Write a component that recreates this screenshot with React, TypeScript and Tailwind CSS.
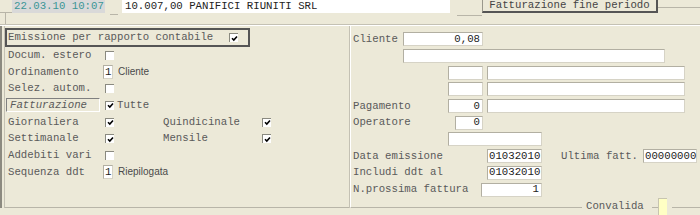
import React from "react";

const Check = ({ on }: { on?: boolean }) => (
  <span className="inline-flex w-[9px] h-[9px] bg-white border-t border-l border-[#8a8a80] items-center justify-center shrink-0">
    {on ? (
      <svg width="7" height="7" viewBox="0 0 7 7">
        <path d="M1 3.2 L2.8 5 L6 1.5" stroke="#000" strokeWidth="1.6" fill="none" />
      </svg>
    ) : null}
  </span>
);

const Field = ({ w, children, right, ml }: { w: string; children?: React.ReactNode; right?: boolean; ml?: string }) => (
  <span
    className={`flex h-[14px] ${w} ${ml ?? ""} bg-white border border-[#d6d3c6] border-t-[#b2afa2] border-l-[#b2afa2] items-center ${right ? "justify-end pr-[2px]" : "pl-[1px]"} text-[#222] shrink-0 leading-none`}
  >
    {children}
  </span>
);

const Row = ({ children, cls }: { children: React.ReactNode; cls?: string }) => (
  <div className={`flex items-center h-[16.7px] shrink-0 ${cls ?? ""}`}>{children}</div>
);

export default function App() {
  return (
    <div className="w-[700px] h-[215px] bg-[#ece9d8] overflow-hidden flex flex-col font-['Liberation_Mono',monospace] text-[10.7px] text-[#5a5a5a] leading-none">
      {/* top strip */}
      <div className="flex items-start h-[24px] shrink-0">
        <div className="w-[12px] h-[24px] flex flex-col shrink-0">
          <div className="h-[13px] border-b border-[#b8b5a8]" />
          <div className="flex-1 ml-[5px] border-l border-[#b8b5a8]" />
        </div>
        <div className="w-[93px] h-[13px] bg-[#d9d9d9] flex items-center pl-[2px] text-[#3a9696]">22.03.10 10:07</div>
        <div className="ml-[5px] w-[8px] h-[15px] border-b border-[#b8b5a8]" />
        <div className="ml-[4px] w-[328px] h-[13px] bg-white flex items-center pl-[3px] text-[#222]">10.007,00 PANIFICI RIUNITI SRL</div>
        <div className="ml-[7px] w-[25px] h-[16px] border-b border-[#b8b5a8]" />
        <div className="w-[176px] h-[13px] border-l border-[#9a988c] border-r-2 border-b-2 border-r-[#555] border-b-[#555] flex items-center justify-center text-[#444]">
          Fatturazione fine periodo
        </div>
        <div className="flex-1 h-[8px] border-b border-[#b8b5a8]" />
      </div>

      {/* main */}
      <div className="relative flex h-[191px] shrink-0 border-t border-[#c4c1b4] items-start">
        <div className="absolute left-0 right-0 top-0 h-px bg-white" />
        {/* left panel */}
        <div className="w-[349px] h-[183px] shrink-0 border-l-2 border-[#8c8a80] flex">
          <div className="ml-[2px] w-[347px] border-l border-[#c4c1b4] flex flex-col border-b border-b-[#b8b5a8] h-[183px]">
            <div className="mt-[3px] w-[245px] h-[19px] border-2 border-[#555] flex items-center pl-[1px] shrink-0">
              <span className="w-[221px]">Emissione per rapporto contabile</span>
              <Check on />
            </div>
            <Row cls="pl-[3px]">
              <span className="w-[97px]">Docum. estero</span>
              <Check />
            </Row>
            <Row cls="pl-[3px]">
              <span className="w-[95px]">Ordinamento</span>
              <Field w="w-[10px]">1</Field>
              <span className="ml-[5px] font-['Liberation_Sans',sans-serif] text-[10px] text-[#4a4a4a]">Cliente</span>
            </Row>
            <Row cls="pl-[3px]">
              <span className="w-[97px]">Selez. autom.</span>
              <Check />
            </Row>
            <Row cls="pl-[1px]">
              <span className="w-[94px] h-[14px] border border-[#808080] border-r-white border-b-white flex items-center pl-[3px] italic">
                Fatturazione
              </span>
              <span className="ml-[5px] flex"><Check on /></span>
              <span className="ml-[3px]">Tutte</span>
            </Row>
            <Row cls="pl-[3px]">
              <span className="w-[97px]">Giornaliera</span>
              <Check on />
              <span className="ml-[49px] w-[99px]">Quindicinale</span>
              <Check on />
            </Row>
            <Row cls="pl-[3px]">
              <span className="w-[97px]">Settimanale</span>
              <Check on />
              <span className="ml-[49px] w-[99px]">Mensile</span>
              <Check on />
            </Row>
            <Row cls="pl-[3px]">
              <span className="w-[97px]">Addebiti vari</span>
              <Check />
            </Row>
            <Row cls="pl-[3px]">
              <span className="w-[95px]">Sequenza ddt</span>
              <Field w="w-[10px]">1</Field>
              <span className="ml-[5px] font-['Liberation_Sans',sans-serif] text-[10px] text-[#4a4a4a]">Riepilogata</span>
            </Row>
          </div>
        </div>
        {/* right panel */}
        <div className="flex-1 h-[183px] flex flex-col border-l border-[#c4c1b4]">
          <div className="h-[183px] border-l border-white border-b border-b-[#b8b5a8] pt-[6px] pl-[2px] flex flex-col">
            <Row>
              <span className="w-[50px]">Cliente</span>
              <Field w="w-[80px]" right>0,08</Field>
            </Row>
            <Row>
              <Field w="w-[262px]" ml="ml-[50px]" />
            </Row>
            <Row>
              <Field w="w-[35px]" ml="ml-[95px]" />
              <Field w="w-[198px]" ml="ml-[4px]" />
            </Row>
            <Row>
              <Field w="w-[35px]" ml="ml-[95px]" />
              <Field w="w-[198px]" ml="ml-[4px]" />
            </Row>
            <Row>
              <span className="w-[95px]">Pagamento</span>
              <Field w="w-[35px]" right>0</Field>
              <Field w="w-[198px]" ml="ml-[4px]" />
            </Row>
            <Row>
              <span className="w-[102px]">Operatore</span>
              <Field w="w-[28px]" right>0</Field>
            </Row>
            <Row>
              <Field w="w-[94px]" ml="ml-[95px]" />
            </Row>
            <Row>
              <span className="w-[134px]">Data emissione</span>
              <Field w="w-[55px]">01032010</Field>
              <span className="ml-[19px] w-[82px]">Ultima fatt.</span>
              <Field w="w-[54px]">00000000</Field>
            </Row>
            <Row>
              <span className="w-[134px]">Includi ddt al</span>
              <Field w="w-[55px]">01032010</Field>
            </Row>
            <Row>
              <span className="w-[128px]">N.prossima fattura</span>
              <Field w="w-[61px]" right>1</Field>
            </Row>
          </div>
        </div>
        {/* bottom caption over frame line */}
        <div className="absolute left-[582px] top-[173px] h-[17px] w-[90px] flex items-center bg-[#ece9d8]">
          <span className="ml-[4px]">Convalida</span>
          <span className="ml-[8px] w-[6px] h-px bg-[#b8b5a8] mt-[2px]" />
          <span className="w-[9px] h-[17px] bg-[#ffffc4] border-l border-t border-[#c8c5b0]" />
        </div>
      </div>
    </div>
  );
}
